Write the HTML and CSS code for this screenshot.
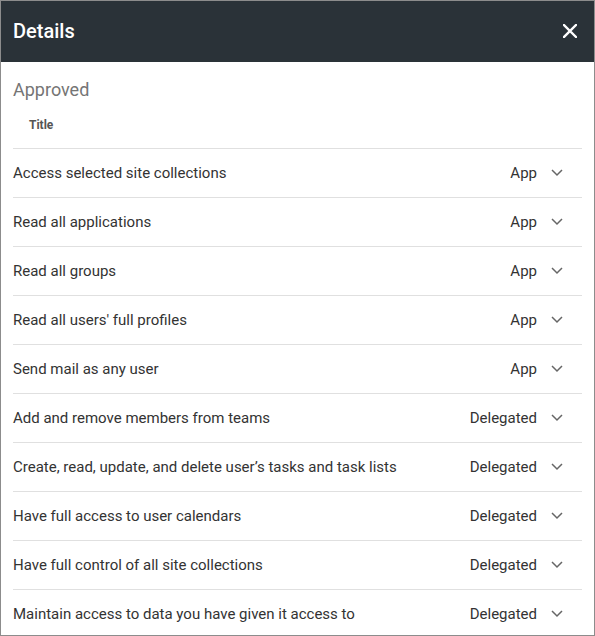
FILE: index.html
```html
<!DOCTYPE html>
<html>
<head>
<meta charset="utf-8">
<link rel="stylesheet" href="styles.css">
</head>
<body>
<div class="panel">
  <header class="head">
    <h1 class="head-title">Details</h1>
    <button class="close" aria-label="Close">
      <svg width="14" height="14" viewBox="0 0 14 14"><path d="M1 1L13 13M13 1L1 13" stroke="#fff" stroke-width="2.4" stroke-linecap="square" fill="none"/></svg>
    </button>
  </header>
  <main class="content">
    <h2 class="section">Approved</h2>
    <div class="col-head">Title</div>
    <ul class="list">
      <li class="row"><span class="name">Access selected site collections</span><span class="type">App</span><span class="chev"><svg width="24" height="24" viewBox="0 0 24 24"><polyline points="7,9 12,14 17,9" fill="none" stroke="#666" stroke-width="1.5"/></svg></span></li>
      <li class="row"><span class="name">Read all applications</span><span class="type">App</span><span class="chev"><svg width="24" height="24" viewBox="0 0 24 24"><polyline points="7,9 12,14 17,9" fill="none" stroke="#666" stroke-width="1.5"/></svg></span></li>
      <li class="row"><span class="name">Read all groups</span><span class="type">App</span><span class="chev"><svg width="24" height="24" viewBox="0 0 24 24"><polyline points="7,9 12,14 17,9" fill="none" stroke="#666" stroke-width="1.5"/></svg></span></li>
      <li class="row"><span class="name">Read all users' full profiles</span><span class="type">App</span><span class="chev"><svg width="24" height="24" viewBox="0 0 24 24"><polyline points="7,9 12,14 17,9" fill="none" stroke="#666" stroke-width="1.5"/></svg></span></li>
      <li class="row"><span class="name">Send mail as any user</span><span class="type">App</span><span class="chev"><svg width="24" height="24" viewBox="0 0 24 24"><polyline points="7,9 12,14 17,9" fill="none" stroke="#666" stroke-width="1.5"/></svg></span></li>
      <li class="row"><span class="name">Add and remove members from teams</span><span class="type">Delegated</span><span class="chev"><svg width="24" height="24" viewBox="0 0 24 24"><polyline points="7,9 12,14 17,9" fill="none" stroke="#666" stroke-width="1.5"/></svg></span></li>
      <li class="row"><span class="name">Create, read, update, and delete user’s tasks and task lists</span><span class="type">Delegated</span><span class="chev"><svg width="24" height="24" viewBox="0 0 24 24"><polyline points="7,9 12,14 17,9" fill="none" stroke="#666" stroke-width="1.5"/></svg></span></li>
      <li class="row"><span class="name">Have full access to user calendars</span><span class="type">Delegated</span><span class="chev"><svg width="24" height="24" viewBox="0 0 24 24"><polyline points="7,9 12,14 17,9" fill="none" stroke="#666" stroke-width="1.5"/></svg></span></li>
      <li class="row"><span class="name">Have full control of all site collections</span><span class="type">Delegated</span><span class="chev"><svg width="24" height="24" viewBox="0 0 24 24"><polyline points="7,9 12,14 17,9" fill="none" stroke="#666" stroke-width="1.5"/></svg></span></li>
      <li class="row"><span class="name">Maintain access to data you have given it access to</span><span class="type">Delegated</span><span class="chev"><svg width="24" height="24" viewBox="0 0 24 24"><polyline points="7,9 12,14 17,9" fill="none" stroke="#666" stroke-width="1.5"/></svg></span></li>
    </ul>
  </main>
</div>
</body>
</html>
```

FILE: styles.css
```css
* { box-sizing: border-box; }
html, body { margin: 0; padding: 0; background: #fff; }
body { font-family: Roboto, "Liberation Sans", sans-serif; }

.panel {
  width: 595px;
  height: 636px;
  border: 1px solid #8c8c8c;
  overflow: hidden;
  display: flex;
  flex-direction: column;
}

.head {
  height: 61px;
  flex: none;
  background: #2a3238;
  display: flex;
  align-items: center;
  justify-content: space-between;
  padding: 0 17px 2px 12px;
}
.head-title {
  margin: 0;
  color: #fff;
  font-size: 20px;
  font-weight: 500;
  line-height: 24px;
}
.close {
  border: 0;
  background: transparent;
  padding: 0;
  width: 14px;
  height: 14px;
  display: flex;
}

.content {
  padding: 16px 12px 0 12px;
}
.section {
  margin: 0;
  font-size: 18px;
  font-weight: 400;
  line-height: 24px;
  color: #757575;
}
.col-head {
  height: 46px;
  line-height: 46px;
  padding-left: 16px;
  font-size: 12px;
  font-weight: 700;
  color: #555;
}
.list {
  list-style: none;
  margin: 0;
  padding: 0;
}
.row {
  height: 49px;
  border-top: 1px solid #e0e0e0;
  display: flex;
  align-items: center;
  font-size: 15px;
  color: #333;
  padding-right: 13px;
}
.name { flex: 1; }
.type { margin-right: 8px; }
.chev { display: flex; width: 24px; height: 24px; }
```
